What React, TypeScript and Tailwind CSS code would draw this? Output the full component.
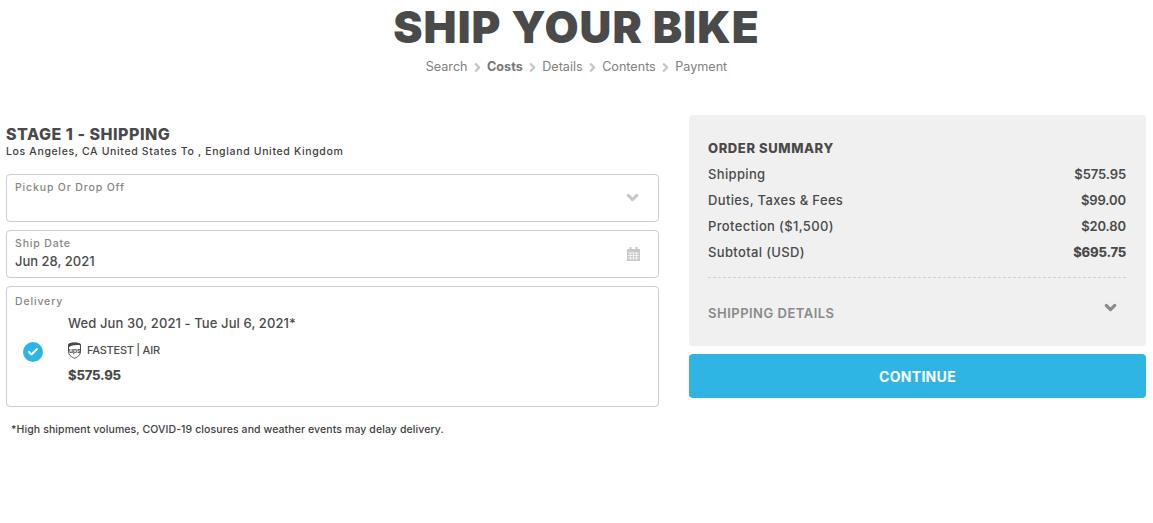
import { Check, ChevronDown, ChevronRight } from "lucide-react"

const crumbs = ["Search", "Costs", "Details", "Contents", "Payment"]

const rows = [
    { label: "Shipping", value: "$575.95" },
    { label: "Duties, Taxes & Fees", value: "$99.00" },
    { label: "Protection ($1,500)", value: "$20.80" },
    { label: "Subtotal (USD)", value: "$695.75", strong: true },
]

function CalendarIcon() {
    return (
        <svg width="13" height="14" viewBox="0 0 13 14" className="text-[#c8c8c8]">
            <rect x="0" y="2" width="13" height="12" fill="currentColor" />
            <rect x="2.5" y="0" width="2" height="3" fill="currentColor" />
            <rect x="8.5" y="0" width="2" height="3" fill="currentColor" />
            <path d="M1 6h11M1 8.5h11M1 11h11M3.5 5.5V13M6.5 5.5V13M9.5 5.5V13" stroke="#fff" strokeWidth="0.7" fill="none" />
        </svg>
    )
}

function UpsIcon() {
    return (
        <svg width="13" height="17" viewBox="0 0 13 17">
            <path d="M0.5 2.2C4 0.4 9 0.4 12.5 2.2V9.5C12.5 13 9.5 15 6.5 16.4C3.5 15 0.5 13 0.5 9.5Z" fill="#fff" stroke="#4a4a4a" strokeWidth="1" />
            <path d="M0.5 2.2C4 0.4 9 0.4 12.5 2.2V3.4C9 2.6 4 3 0.5 5.5Z" fill="#4a4a4a" />
            <text x="6.7" y="11" textAnchor="middle" fontSize="7" fontWeight="600" fill="#4a4a4a" fontFamily="Inter, sans-serif">ups</text>
        </svg>
    )
}

export default function App() {
    return (
        <div className="h-[523px] bg-white text-[#4a4a4a] font-['Inter',sans-serif] overflow-hidden">
            <h1 className="pt-px text-center text-[44px] leading-[52px] font-black tracking-[1.1px]">SHIP YOUR BIKE</h1>
            <div className="flex justify-center items-center mt-[5px] h-[18px] text-[12.6px] text-[#808080]">
                {crumbs.map((c, i) => (
                    <div key={c} className="flex items-center">
                        {i > 0 && <ChevronRight size={13} strokeWidth={4.5} className="text-[#c4c4c4] mx-[3.25px]" />}
                        <span className={c === "Costs" ? "font-bold text-[#757575]" : ""}>{c}</span>
                    </div>
                ))}
            </div>

            <div className="flex gap-[30px] pl-[6px] pr-[7px] mt-[39px]">
                <div className="w-[653px]">
                    <h2 className="mt-[10px] text-[16px] leading-[19px] font-extrabold tracking-[0.5px]">STAGE 1 - SHIPPING</h2>
                    <p className="mt-px text-[10.5px] leading-[14px] font-medium tracking-[0.65px] text-[#404040]">Los Angeles, CA United States To , England United Kingdom</p>

                    <div className="mt-[15px] h-[48px] border border-[#cccccc] rounded flex justify-between pl-[8px] pr-[17px]">
                        <span className="mt-[6px] text-[10.5px] leading-[13px] font-medium tracking-[0.85px] text-[#858585]">Pickup Or Drop Off</span>
                        <ChevronDown size={17} strokeWidth={4.5} className="text-[#c8c8c8] mt-[14px]" />
                    </div>

                    <div className="mt-[8px] h-[48px] border border-[#cccccc] rounded flex justify-between pl-[8px] pr-[18px]">
                        <div className="flex flex-col">
                            <span className="mt-[6px] text-[10.5px] leading-[13px] font-medium tracking-[0.85px] text-[#858585]">Ship Date</span>
                            <span className="mt-[3px] text-[13px] leading-[16px] font-medium">Jun 28, 2021</span>
                        </div>
                        <div className="mt-[16px]"><CalendarIcon /></div>
                    </div>

                    <div className="mt-[8px] h-[121px] border border-[#cccccc] rounded pl-[8px] pt-[8px]">
                        <div className="text-[10.5px] leading-[13px] font-medium tracking-[0.85px] text-[#858585]">Delivery</div>
                        <div className="flex items-start">
                            <div className="mt-[34px] ml-[8px] w-[20px] h-[20px] rounded-full bg-[#2fb5e4] flex items-center justify-center">
                                <Check size={12} strokeWidth={4} className="text-white" />
                            </div>
                            <div className="ml-[25px] mt-[6px]">
                                <div className="text-[13px] leading-[18px] font-medium tracking-[0.1px]">Wed Jun 30, 2021 - Tue Jul 6, 2021*</div>
                                <div className="flex items-center mt-[10px] h-[17px] text-[11px] font-medium tracking-[-0.25px]">
                                    <UpsIcon />
                                    <span className="ml-[6px]">FASTEST | AIR</span>
                                </div>
                                <div className="mt-[7px] text-[13px] leading-[18px] font-extrabold tracking-[-0.2px]">$575.95</div>
                            </div>
                        </div>
                    </div>

                    <p className="mt-[16px] ml-[5px] text-[10.5px] leading-[14px] font-medium tracking-[0.1px] text-[#404040]">*High shipment volumes, COVID-19 closures and weather events may delay delivery.</p>
                </div>

                <div className="w-[457px]">
                    <div className="h-[231px] bg-[#f0f0f0] rounded pt-[24px] pl-[19px] pr-[20px]">
                        <div className="text-[13px] leading-[18px] font-extrabold tracking-[0.6px]">ORDER SUMMARY</div>
                        <div className="mt-[7px] flex flex-col gap-[4px]">
                            {rows.map((r) => (
                                <div key={r.label} className="flex justify-between h-[22px] items-center text-[13px] font-medium">
                                    <span className="tracking-[0.35px]">{r.label}</span>
                                    <span className={r.strong ? "font-extrabold tracking-[-0.2px]" : "font-semibold tracking-[-0.1px]"}>{r.value}</span>
                                </div>
                            ))}
                        </div>
                        <div className="mt-[13px] border-t border-dashed border-[#cfcfcf]" />
                        <div className="flex justify-between pr-[7px]">
                            <span className="mt-[27px] text-[13px] leading-[17px] font-semibold tracking-[0.5px] text-[#8a8a8a]">SHIPPING DETAILS</span>
                            <ChevronDown size={17} strokeWidth={4.5} className="text-[#8a8a8a] mt-[21px]" />
                        </div>
                    </div>
                    <button className="mt-[8px] w-full h-[44px] bg-[#2fb5e4] rounded text-white text-[14px] font-bold tracking-[0.3px]">CONTINUE</button>
                </div>
            </div>
        </div>
    )
}
